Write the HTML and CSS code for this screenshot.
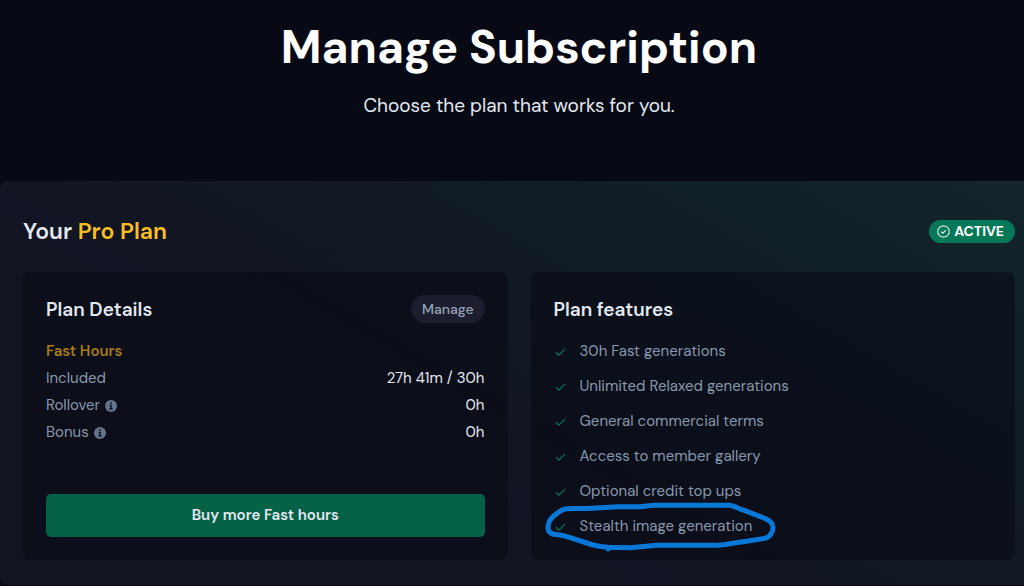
FILE: index.html
```html
<!DOCTYPE html>
<html lang="en">
<head>
<meta charset="utf-8">
<meta name="viewport" content="width=device-width, initial-scale=1">
<title>Manage Subscription</title>
<link rel="stylesheet" href="styles.css">
</head>
<body>
<svg class="sprite" aria-hidden="true">
  <symbol id="check" viewBox="0 0 12 12"><path d="M1.8 6.2 4.8 9.2 10.8 3.200" fill="none" stroke="currentColor" stroke-width="1.2"/></symbol>
  <symbol id="info" viewBox="0 0 12 12"><circle cx="6" cy="6" r="6" fill="currentColor"/><path d="M6 2.2v1.7M4.5 5.4H6v3.4M4.3 8.900h3.400" fill="none" stroke="#0b0e19" stroke-width="1.4"/></symbol>
</svg>
<header class="page-header">
  <h1 class="page-title">Manage Subscription</h1>
  <p class="page-subtitle">Choose the plan that works for you.</p>
</header>
<main class="panel">
  <div class="panel-head">
    <h2 class="plan-name">Your <span class="plan-tier">Pro Plan</span></h2>
    <span class="status">
      <svg class="status-icon" viewBox="0 0 12 12" aria-hidden="true"><path d="M6 .7 7.5 1.2 9.1 1.6 10.1 2.8 11.2 4.2 11.1 6 11.2 7.8 10.1 9.2 9 10.4 7.5 10.8 6 11.3 4.5 10.8 3 10.4 1.9 9.2.8 7.8.9 6 .8 4.2 1.9 2.8 3 1.6 4.5 1.2Z M3.9 6.2 5.3 7.6 8.1 4.7" fill="none" stroke="currentColor" stroke-width="1.1" stroke-linejoin="round"/></svg>
      ACTIVE
    </span>
  </div>
  <div class="cards">
    <section class="card">
      <div class="card-head">
        <h3 class="card-title">Plan Details</h3>
        <button class="manage" type="button">Manage</button>
      </div>
      <h4 class="group">Fast Hours</h4>
      <dl class="hours">
        <div class="row"><dt class="label">Included</dt><dd class="value">27h 41m / 30h</dd></div>
        <div class="row"><dt class="label">Rollover <svg class="info"><use href="#info"/></svg></dt><dd class="value">0h</dd></div>
        <div class="row"><dt class="label">Bonus <svg class="info"><use href="#info"/></svg></dt><dd class="value">0h</dd></div>
      </dl>
      <button class="buy" type="button">Buy more Fast hours</button>
    </section>
    <section class="card">
      <div class="card-head"><h3 class="card-title">Plan features</h3></div>
      <ul class="features">
        <li class="feature"><svg class="check"><use href="#check"/></svg>30h Fast generations</li>
        <li class="feature"><svg class="check"><use href="#check"/></svg>Unlimited Relaxed generations</li>
        <li class="feature"><svg class="check"><use href="#check"/></svg>General commercial terms</li>
        <li class="feature"><svg class="check"><use href="#check"/></svg>Access to member gallery</li>
        <li class="feature"><svg class="check"><use href="#check"/></svg>Optional credit top ups</li>
        <li class="feature"><svg class="check"><use href="#check"/></svg>Stealth image generation
          <svg class="marker" viewBox="0 0 234 50" aria-hidden="true"><path d="M20 6 C28 5 38 6 47 5.300 L73 3.700 L95 3.700 L108 2.300 L185 2.300 C190 3 194 6 198 7 L218 14.700 C224 17 228 20 228 24 C228 29 225 34 220 35.300 L198 38.700 C190 40 180 42 172 42.300 L112 42.300 L85 44.700 L63 44.300 C57 44 52 43 48 42 L22 33.700 C17 32 13 32 8 31 C4 30 3 27 3 25 C3 20 5 16 8 13.700 C12 10 16 7 20 6 M63 44.500v1.500"/></svg>
        </li>
      </ul>
    </section>
  </div>
</main>
</body>
</html>
```
FILE: styles.css
```css
* { box-sizing: border-box; margin: 0; padding: 0; }
body { background: #070a15; color: #e2e8f0; font-family: "DM Sans", Inter, sans-serif; font-size: 15px; line-height: 27px; overflow-x: hidden; }
button { font: inherit; border: 0; cursor: pointer; }
.sprite { position: absolute; width: 0; height: 0; }
.page-header { padding: 17px 0 62px 14px; text-align: center; }
.page-title { color: #fff; font-size: 46px; line-height: 60px; font-weight: 700; }
.page-subtitle { margin-top: 15px; font-size: 19px; line-height: 27px; }
.panel { padding: 34px 9px 25px 23px; border-radius: 8px 0 0 8px; background: linear-gradient(30deg, #121422 0%, #121422 35%, #111923 60%, #12262b 100%); }
.panel-head { display: flex; align-items: center; justify-content: space-between; margin-bottom: 25px; }
.plan-name { font-size: 23px; line-height: 32px; font-weight: 600; }
.plan-tier { color: #fbbf24; }
.status { display: flex; align-items: center; gap: 4px; height: 23px; padding: 0 11px 0 8px; border-radius: 12px; background: #047857; color: #fff; font-size: 14px; font-weight: 700; }
.status-icon { width: 13px; height: 13px; opacity: .85; }
.cards { display: grid; grid-template-columns: 1fr 1fr; gap: 23px; }
.card { display: flex; flex-direction: column; padding: 23px 23px 20px; border-radius: 8px; background: rgba(8, 10, 20, .6); }
.card-head { display: flex; align-items: center; justify-content: space-between; min-height: 28px; margin-bottom: 15px; }
.card-title { font-size: 19px; font-weight: 600; }
.manage { height: 28px; padding: 0 11px; border-radius: 14px; background: #1c1e2d; color: #94a3b8; font-size: 14px; font-weight: 500; line-height: 28px; }
.group { color: #a87b1a; font-size: 15px; font-weight: 600; }
.row { display: flex; justify-content: space-between; }
.label { display: flex; align-items: center; gap: 5px; color: #8798ae; }
.info { width: 12px; height: 12px; color: #64748b; }
.buy { margin-top: auto; margin-bottom: 3px; height: 43px; border-radius: 5px; background: #056247; color: #e2e8f0; font-size: 15px; font-weight: 600; }
.features { display: grid; gap: 8px; list-style: none; }
.feature { position: relative; display: flex; align-items: center; gap: 14px; color: #8798ae; }
.check { width: 12px; height: 12px; color: #047857; }
.marker { position: absolute; left: -9px; top: -10px; width: 234px; height: 50px; overflow: visible; fill: none; stroke: #0878d8; stroke-width: 5; stroke-linecap: round; }
```
